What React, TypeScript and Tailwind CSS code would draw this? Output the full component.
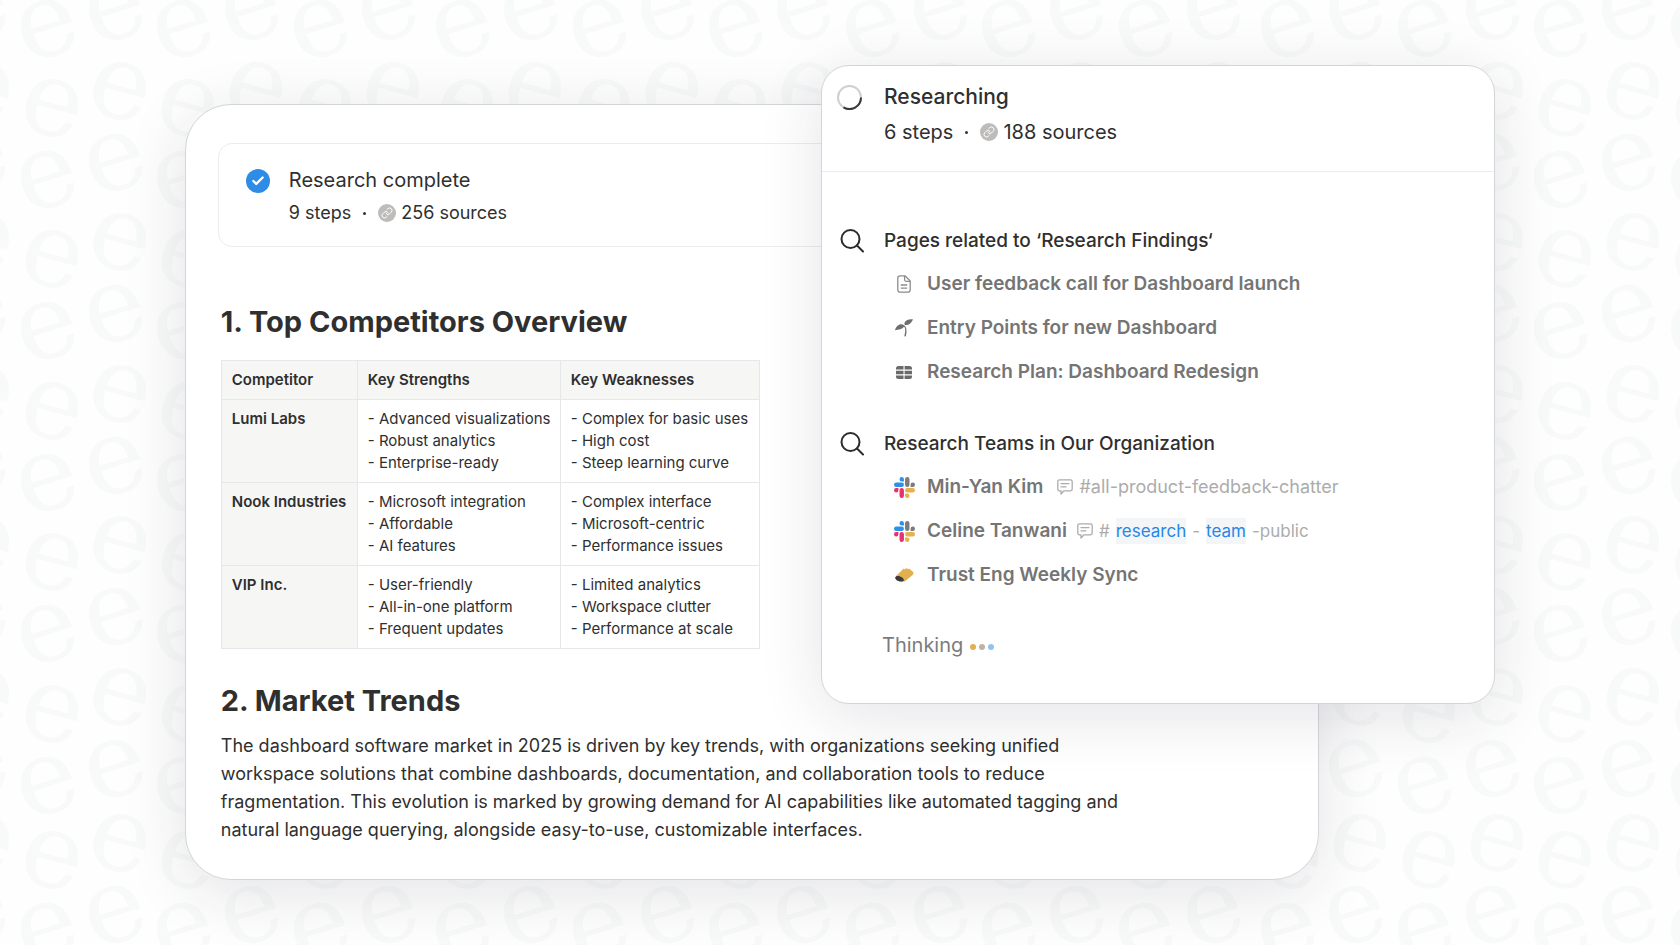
import { Check, Link } from "lucide-react";
import type { ReactNode } from "react";

const competitors = [
  {
    name: "Lumi Labs",
    strengths: ["Advanced visualizations", "Robust analytics", "Enterprise-ready"],
    weaknesses: ["Complex for basic uses", "High cost", "Steep learning curve"],
  },
  {
    name: "Nook Industries",
    strengths: ["Microsoft integration", "Affordable", "AI features"],
    weaknesses: ["Complex interface", "Microsoft-centric", "Performance issues"],
  },
  {
    name: "VIP Inc.",
    strengths: ["User-friendly", "All-in-one platform", "Frequent updates"],
    weaknesses: ["Limited analytics", "Workspace clutter", "Performance at scale"],
  },
];

// Wallpaper: tiles of 12 columns by 5 rows, every other column raised a little
const columns = Array.from({ length: 60 }, (_, i) => ({
  x: Math.round(-392 + Math.floor(i / 12) * 825 + (i % 12) * 68.25),
  lift: i % 2 ? -17 : 0,
}));
const rows = Array.from({ length: 15 }, (_, i) => Math.round(77 - 151.4 + i * 151.4 - (i > 5 ? 5 : 0)));

function Wallpaper() {
  return (
    <svg className="absolute inset-0 h-full w-full" fill="#f8faf9" aria-hidden="true">
      <defs>
        <g id="e-left">
          <text fontFamily="DejaVu Serif, serif" fontSize="105" textAnchor="middle" y="28" transform="rotate(-17)">e</text>
        </g>
        <g id="e-right">
          <text fontFamily="DejaVu Serif, serif" fontSize="105" textAnchor="middle" y="28" transform="rotate(15)">e</text>
        </g>
      </defs>
      {columns.map((col) =>
        rows.map((y) => (
          <g key={`${col.x}-${y}`}>
            <use href="#e-right" x={col.x + 34} y={y + col.lift + 30} />
            <use href="#e-left" x={col.x + 29} y={y + col.lift + 102} />
          </g>
        ))
      )}
    </svg>
  );
}

function SearchIcon() {
  return (
    <svg className="h-6 w-6 text-[#2b2b2b]" viewBox="0 0 24 24" fill="none" stroke="currentColor" strokeWidth="2" strokeLinecap="round">
      <circle cx="10.5" cy="10" r="9" />
      <path d="M17 16.500l6 6" />
    </svg>
  );
}

function Spinner() {
  return (
    <svg className="h-[25px] w-[25px]" viewBox="0 0 25 25" fill="none" strokeWidth="2">
      <circle cx="12.5" cy="12.5" r="11.5" stroke="#cfcfcf" />
      <path d="M24 12.5A11.5 11.5 0 0 1 6.5 22.3" stroke="#3a3a3a" />
    </svg>
  );
}

function PageIcon() {
  return (
    <svg className="h-[18px] w-[14px]" viewBox="0 0 14 18" fill="none" stroke="#8c8c8c" strokeWidth="1.3" strokeLinejoin="round">
      <path d="M3 .8h5L13.2 6v9a2.2 2.2 0 0 1-2.2 2.2H3A2.2 2.2 0 0 1 .8 15V3A2.2 2.2 0 0 1 3 .8z" />
      <path d="M7.6 1v3.6a1.8 1.8 0 0 0 1.8 1.8H13M3.8 10h6.4M3.8 13.2h6.4" />
    </svg>
  );
}

function SproutIcon() {
  return (
    <svg className="h-[18px] w-[18px]" viewBox="0 0 18 18" fill="#6f6f6f">
      <path d="M18 .4c-4-.5-7.600.6-8.500 3.500-.2.700-.1 1.300.2 1.800 3.300 1 6.600-1.200 8.300-5.300z" />
      <path d="M9 6.300C6.800 4.600 4.200 5.300 2.300 7 1 8.200.4 9.600 0 11.200c3.600-.2 7.400-.9 9-3.600 1 .9 1.300 2.300 1.200 4-.1 1.900-.4 3.700-.9 5.600l1.400.4c.6-2.100.9-4.100.8-6.100-.1-2.300-.9-4.300-2.500-5.200z" />
    </svg>
  );
}

function TableIcon() {
  return (
    <svg className="h-[13px] w-[16px]" viewBox="0 0 16 13" fill="#6a6a6a">
      <path d="M2.500 0h5v3.600H0V2.500A2.500 2.500 0 0 1 2.500 0zM8.600 0h4.900A2.500 2.500 0 0 1 16 2.500v1.100H8.600zM0 4.800h7.500v3.400H0zM8.600 4.800H16v3.400H8.600zM0 9.400h7.500V13h-5A2.500 2.500 0 0 1 0 10.500zM8.600 9.400H16v1.100a2.500 2.500 0 0 1-2.500 2.500H8.600z" />
    </svg>
  );
}

function SlackIcon() {
  return (
    <svg className="h-[21px] w-[21px]" viewBox="0 0 24 24">
      <path fill="#e8316d" d="M5.042 15.165a2.528 2.528 0 0 1-2.520 2.523A2.528 2.528 0 0 1 0 15.165a2.527 2.527 0 0 1 2.522-2.520h2.520v2.520zM6.313 15.165a2.527 2.527 0 0 1 2.521-2.520 2.527 2.527 0 0 1 2.521 2.520v6.313A2.528 2.528 0 0 1 8.834 24a2.528 2.528 0 0 1-2.521-2.522v-6.313z" />
      <path fill="#2f90e8" d="M8.834 5.042a2.528 2.528 0 0 1-2.521-2.520A2.528 2.528 0 0 1 8.834 0a2.528 2.528 0 0 1 2.521 2.522v2.520H8.834zM8.834 6.313a2.528 2.528 0 0 1 2.521 2.521 2.528 2.528 0 0 1-2.521 2.521H2.522A2.528 2.528 0 0 1 0 8.834a2.528 2.528 0 0 1 2.522-2.521h6.312z" />
      <path fill="#7b7b7b" d="M18.956 8.834a2.528 2.528 0 0 1 2.522-2.521A2.528 2.528 0 0 1 24 8.834a2.528 2.528 0 0 1-2.522 2.521h-2.522V8.834zM17.688 8.834a2.528 2.528 0 0 1-2.523 2.521 2.527 2.527 0 0 1-2.520-2.521V2.522A2.527 2.527 0 0 1 15.165 0a2.528 2.528 0 0 1 2.523 2.522v6.312z" />
      <path fill="#e6b24d" d="M15.165 18.956a2.528 2.528 0 0 1 2.523 2.522A2.528 2.528 0 0 1 15.165 24a2.527 2.527 0 0 1-2.520-2.522v-2.522h2.520zM15.165 17.688a2.527 2.527 0 0 1-2.520-2.523 2.526 2.526 0 0 1 2.520-2.520h6.313A2.527 2.527 0 0 1 24 15.165a2.528 2.528 0 0 1-2.522 2.523h-6.313z" />
    </svg>
  );
}

function HornIcon() {
  return (
    <svg className="h-[14px] w-[19px]" viewBox="0 0 19 14">
      <path fill="#e3b04f" d="M.8 8.200 7.200 2l.9-1.400 1 .8L11.300.2l1.600.9 1.300-.4 4.300 3.500-.3 2.300-8.400 7-8-1.200z" />
      <path fill="#3b3b3f" d="M.3 9.200C1 7.900 2.700 7.600 4.600 8.200c2.300.7 4.100 2.200 4.300 3.700.1 1.300-1.300 1.900-3.400 1.700C2.600 13.300-.4 11 .3 9.200z" />
    </svg>
  );
}

function ChatIcon() {
  return (
    <svg className="h-4 w-4 shrink-0" viewBox="0 0 16 16" fill="none" stroke="#acacac" strokeWidth="1.3" strokeLinecap="round" strokeLinejoin="round">
      <path d="M2.500.8h11a1.700 1.700 0 0 1 1.700 1.700v7.600a1.700 1.700 0 0 1-1.700 1.700H7L4 15v-3.200H2.500A1.700 1.700 0 0 1 .8 10.100V2.500A1.700 1.700 0 0 1 2.500.8zM4 4.600h8M4 7.800h5" />
    </svg>
  );
}

function Steps({ steps, sources }: { steps: number; sources: number }) {
  return (
    <>
      <span>{steps} steps</span>
      <span className="mx-3 h-[3px] w-[3px] rounded-full bg-[#333]" />
      <span className="mr-[5px] flex h-[18px] w-[18px] items-center justify-center rounded-full bg-[#bdbcba]">
        <Link className="h-3 w-3 text-white" />
      </span>
      <span>{sources} sources</span>
    </>
  );
}

function ResultRow({ icon, title, children }: { icon: ReactNode; title: string; children?: ReactNode }) {
  return (
    <li className="flex h-11 items-center leading-[26px]">
      <span className="flex w-[21px] shrink-0 justify-center">{icon}</span>
      <span className="ml-3 text-[19px] font-semibold text-[#757575]">{title}</span>
      {children}
    </li>
  );
}

function SearchGroup({ title, children }: { title: string; children: ReactNode }) {
  return (
    <section>
      <div className="flex items-center pl-[18px]">
        <SearchIcon />
        <h3 className="ml-5 text-[19px] leading-8 font-medium">{title}</h3>
      </div>
      <ul className="mt-[5px] pl-[72px]">{children}</ul>
    </section>
  );
}

function Report() {
  return (
    <article className="z-0 col-start-1 col-end-3 row-start-1 mt-[39px] rounded-[46px] border border-[#d4d5d7] bg-white px-8 pt-[38px] pb-[35px] shadow-[0_12px_64px_rgba(30,35,60,0.12)]">
      <div className="flex rounded-[14px] border border-[#ececec] pt-[21px] pb-[18px] pl-[27px]">
        <span className="mt-1 flex h-6 w-6 items-center justify-center rounded-full bg-[#2f8ce6]">
          <Check className="h-[14px] w-[14px] text-white" strokeWidth={4} />
        </span>
        <div className="ml-[19px]">
          <h2 className="text-[20px] leading-[30px]">Research complete</h2>
          <p className="mt-[3px] flex items-center text-[18px] leading-[30px]">
            <Steps steps={9} sources={256} />
          </p>
        </div>
      </div>

      <div className="px-[3px]">
        <h2 className="mt-[55px] text-[29px] leading-10 font-bold">1. Top Competitors Overview</h2>
        <table className="mt-[18px] w-[538px] table-fixed border-collapse text-left align-top text-[15px] leading-[22px] whitespace-nowrap">
          <colgroup>
            <col className="w-[136px]" />
            <col className="w-[203px]" />
            <col className="w-[199px]" />
          </colgroup>
          <thead>
            <tr className="bg-[#f6f6f5]">
              {["Competitor", "Key Strengths", "Key Weaknesses"].map((label) => (
                <th key={label} scope="col" className="border border-[#e6e7e9] px-[10px] py-2 font-semibold">
                  {label}
                </th>
              ))}
            </tr>
          </thead>
          <tbody>
            {competitors.map((row) => (
              <tr key={row.name}>
                <th scope="row" className="border border-[#e6e7e9] bg-[#f6f6f5] px-[10px] py-2 align-top font-semibold">
                  {row.name}
                </th>
                {[row.strengths, row.weaknesses].map((list, i) => (
                  <td key={i} className="border border-[#e6e7e9] px-[10px] py-2 align-top">
                    {list.map((item) => (
                      <div key={item}>- {item}</div>
                    ))}
                  </td>
                ))}
              </tr>
            ))}
          </tbody>
        </table>

        <h2 className="mt-8 text-[29px] leading-10 font-bold">2. Market Trends</h2>
        <p className="mt-[11px] max-w-[920px] text-[18px] leading-7">
          The dashboard software market in 2025 is driven by key trends, with organizations seeking unified workspace
          solutions that combine dashboards, documentation, and collaboration tools to reduce fragmentation. This
          evolution is marked by growing demand for AI capabilities like automated tagging and natural language
          querying, alongside easy-to-use, customizable interfaces.
        </p>
      </div>
    </article>
  );
}

function ResearchPanel() {
  return (
    <aside className="z-10 col-start-2 col-end-4 row-start-1 self-start rounded-[28px] border border-[#d4d5d7] bg-white pb-[42px] shadow-[0_12px_64px_rgba(30,35,60,0.12)]">
      <header className="flex border-b border-[#ededed] pt-[15px] pb-[23px] pl-[15px]">
        <span className="mt-1">
          <Spinner />
        </span>
        <div className="ml-[22px]">
          <h2 className="text-[21px] leading-8 font-medium">Researching</h2>
          <p className="mt-[3px] flex items-center text-[20px] leading-8">
            <Steps steps={6} sources={188} />
          </p>
        </div>
      </header>

      <div className="space-y-[34px] pt-[53px]">
        <SearchGroup title="Pages related to ‘Research Findings‘">
          <ResultRow icon={<PageIcon />} title="User feedback call for Dashboard launch" />
          <ResultRow icon={<SproutIcon />} title="Entry Points for new Dashboard" />
          <ResultRow icon={<TableIcon />} title="Research Plan: Dashboard Redesign" />
        </SearchGroup>
        <SearchGroup title="Research Teams in Our Organization">
          <ResultRow icon={<SlackIcon />} title="Min-Yan Kim">
            <span className="ml-[14px] flex items-center gap-[6px] text-[18px] text-[#acacac]">
              <ChatIcon /> #all-product-feedback-chatter
            </span>
          </ResultRow>
          <ResultRow icon={<SlackIcon />} title="Celine Tanwani">
            <span className="ml-[10px] flex items-center gap-[6px] text-[17px] text-[#acacac]">
              <ChatIcon /> #
              <mark className="bg-[#f4f5f6] text-[#2588ea]">research</mark>-
              <mark className="bg-[#f4f5f6] text-[#2588ea]">team</mark>-public
            </span>
          </ResultRow>
          <ResultRow icon={<HornIcon />} title="Trust Eng Weekly Sync" />
        </SearchGroup>
      </div>

      <p className="mt-8 flex items-center pl-[60px] text-[20px] leading-8 text-[#7c7c7c]">
        Thinking
        <span className="mt-1 ml-[7px] flex gap-[3px]">
          <span className="h-[6px] w-[6px] rounded-full bg-[#e0b052]" />
          <span className="h-[6px] w-[6px] rounded-full bg-[#bdb3a5]" />
          <span className="h-[6px] w-[6px] rounded-full bg-[#8fc4f2]" />
        </span>
      </p>
    </aside>
  );
}

export default function App() {
  return (
    <div className="relative min-h-screen overflow-hidden bg-[#fefefe] font-['Inter','Liberation_Sans',sans-serif] text-[#2f2f2f]">
      <Wallpaper />
      <main className="relative mr-[11%] ml-[11%] grid w-[78%] grid-cols-[636fr_498fr_176fr] pt-[65px] pb-[66px]">
        <Report />
        <ResearchPanel />
      </main>
    </div>
  );
}
